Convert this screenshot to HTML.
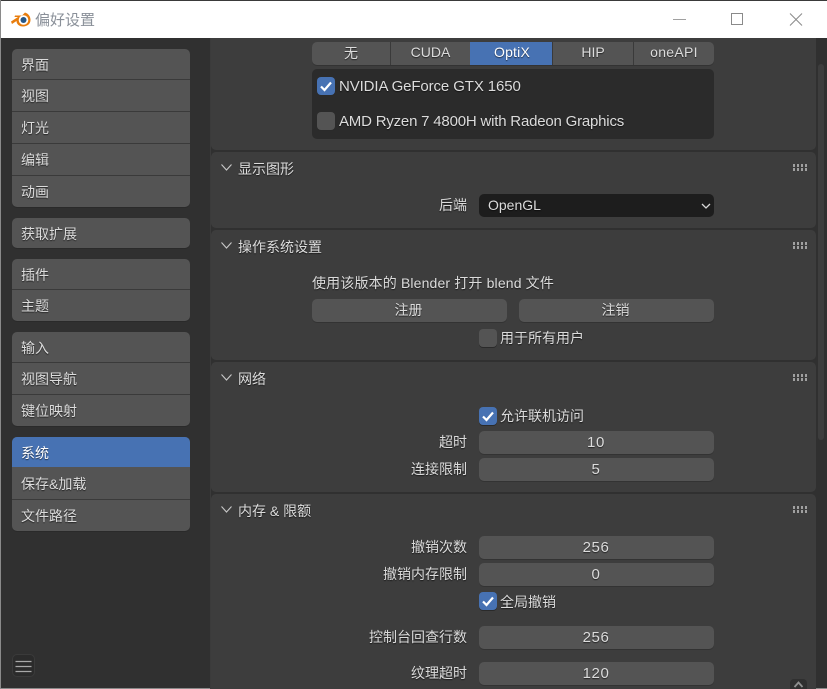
<!DOCTYPE html>
<html lang="zh"><head><meta charset="utf-8"><style>
html,body{margin:0;padding:0;background:#303030}
#w{position:relative;width:827px;height:689px;overflow:hidden;background:#303030;font:14px "Liberation Sans","Noto Sans CJK SC",sans-serif;color:#e0e0e0}
#w div,#w span.t{position:absolute;box-sizing:border-box}
.t{white-space:nowrap;line-height:20px;text-shadow:0 1px 1px rgba(0,0,0,.6);color:#dcdcdc}
.g{left:12px;width:178px;background:#545454;border-radius:5px;box-shadow:0 1px 0 #2a2a2a}
.s{left:0;width:178px;height:1px;background:#3a3a3a}
.p{left:211px;width:605px;background:#3d3d3d;border-radius:5px}
.b{background:#545454;border-radius:5px;box-shadow:0 1px 0 #333;text-align:center;line-height:22px;color:#dcdcdc;text-shadow:0 1px 1px rgba(0,0,0,.6)}
.n{font-size:15px;letter-spacing:.6px;line-height:23px;padding-right:1px}
.c{width:18px;height:18px;border-radius:4px;background:#545454;box-shadow:0 1px 0 #2a2a2a}
.c.on{background:#4772b3}
.c svg{position:absolute;left:0;top:0}
.gr{left:793px;width:14px;height:7px;background:repeating-linear-gradient(90deg,#a0a0a0 0 2px,#3d3d3d 2px 4px)}
.gr:after{content:"";position:absolute;left:0;top:3px;width:14px;height:1px;background:#3d3d3d}
.ch{position:absolute}
.r{text-align:right;width:200px}
</style></head><body><div id="w">
<div style="left:0;top:0;width:827px;height:1px;background:#3a3a3a"></div>
<div style="left:1px;top:1px;width:826px;height:37px;background:#fff"></div>
<div style="left:0;top:0;width:1px;height:689px;background:#8a8a8a"></div>
<div style="left:0;top:688px;width:827px;height:1px;background:#8a8a8a"></div>
<svg class="ch" style="left:10px;top:10px" width="22" height="18" viewBox="0 0 22 18"><path d="M1 11.500 L8 7 L4.500 7 L5 5.500 L12 5.500 L15 2.500 C18 3.500 20.500 6 20.500 10 C20.500 14 17 16.500 13 16.500 C9 16.500 6.500 14 6.500 11 L2 14 Z" fill="#e87d0d"/><circle cx="13.500" cy="10" r="4.800" fill="#fff"/><circle cx="13.500" cy="10" r="3" fill="#265787"/></svg>
<span class="t" style="left:35px;top:11px;font-size:15px;color:#8a9099;text-shadow:none">偏好设置</span>
<svg class="ch" style="left:670px;top:10px" width="140" height="20" viewBox="0 0 140 20"><path d="M3 9.500H16" stroke="#a0a0a0" fill="none"/><rect x="61.500" y="3.500" width="11" height="11" stroke="#8a8a8a" fill="none"/><path d="M120 3.500L132 15.500M132 3.500L120 15.500" stroke="#8a8a8a" fill="none"/></svg>

<!-- sidebar -->
<div class="g" style="top:49px;height:158px"><div class="s" style="top:30px"></div><div class="s" style="top:62px"></div><div class="s" style="top:94px"></div><div class="s" style="top:126px"></div></div>
<span class="t" style="left:21px;top:55px">界面</span><span class="t" style="left:21px;top:86px">视图</span><span class="t" style="left:21px;top:118px">灯光</span><span class="t" style="left:21px;top:150px">编辑</span><span class="t" style="left:21px;top:182px">动画</span>
<div class="g" style="top:218px;height:30px"></div><span class="t" style="left:21px;top:224px">获取扩展</span>
<div class="g" style="top:259px;height:62px"><div class="s" style="top:30px"></div></div>
<span class="t" style="left:21px;top:265px">插件</span><span class="t" style="left:21px;top:296px">主题</span>
<div class="g" style="top:332px;height:94px"><div class="s" style="top:30px"></div><div class="s" style="top:62px"></div></div>
<span class="t" style="left:21px;top:338px">输入</span><span class="t" style="left:21px;top:369px">视图导航</span><span class="t" style="left:21px;top:401px">键位映射</span>
<div class="g" style="top:437px;height:94px"><div style="left:0;top:0;width:178px;height:30px;background:#4772b3;border-radius:5px 5px 0 0"></div><div class="s" style="top:62px"></div></div>
<span class="t" style="left:21px;top:443px;color:#fff">系统</span><span class="t" style="left:21px;top:474px">保存&amp;加载</span><span class="t" style="left:21px;top:506px">文件路径</span>
<div style="left:12px;top:654px;width:23px;height:23px;border-radius:5px;background:#2b2b2b;border:1px solid #3a3a3a"></div>
<svg class="ch" style="left:12px;top:654px" width="23" height="23"><path d="M3.500 7.500H19.500M3.500 12.500H19.500M3.500 17.500H19.500" stroke="#a8a8a8" stroke-width="1.300" fill="none"/></svg>

<!-- right region -->
<div style="left:210px;top:38px;width:1px;height:651px;background:#3b3b3b"></div>
<div style="left:818px;top:64px;width:6px;height:376px;background:#3d3d3d;border-radius:3px"></div>

<!-- panel 1 -->
<div class="p" style="top:38px;height:112px;border-radius:0 0 5px 5px"></div>
<div class="b" style="left:312px;top:42px;width:402px;height:23px;line-height:21px"></div>
<div style="left:470px;top:42px;width:82px;height:23px;background:#4772b3"></div>
<div style="left:390px;top:42px;width:1px;height:23px;background:#3a3a3a"></div>
<div style="left:552px;top:42px;width:1px;height:23px;background:#3a3a3a"></div>
<div style="left:633px;top:42px;width:1px;height:23px;background:#3a3a3a"></div>
<span class="t" style="left:312px;top:43px;width:78px;text-align:center">无</span>
<span class="t" style="left:391px;top:42px;width:79px;text-align:center">CUDA</span>
<span class="t" style="left:471px;top:42px;width:82px;text-align:center;color:#fff;letter-spacing:.2px">OptiX</span>
<span class="t" style="left:553px;top:42px;width:80px;text-align:center">HIP</span>
<span class="t" style="left:634px;top:42px;width:80px;text-align:center;letter-spacing:.3px">oneAPI</span>
<div style="left:312px;top:69px;width:402px;height:70px;background:#2b2b2b;border-radius:5px"></div>
<div class="c on" style="left:317px;top:77px"><svg width="18" height="18"><path d="M4 9.500L7.500 13L14 5.500" stroke="#fff" stroke-width="2.200" fill="none"/></svg></div>
<span class="t" style="left:339px;top:76px;font-size:15px;letter-spacing:-.11px;line-height:22px">NVIDIA GeForce GTX 1650</span>
<div class="c" style="left:317px;top:112px"></div>
<span class="t" style="left:339px;top:111px;font-size:15px;letter-spacing:-.2px;line-height:22px">AMD Ryzen 7 4800H with Radeon Graphics</span>

<!-- panel 2 -->
<div class="p" style="top:152px;height:76px"></div>
<svg class="ch" style="left:220px;top:163px" width="14" height="10"><path d="M1.500 1.500L6.500 7L11.500 1.500" stroke="#c8c8c8" stroke-width="1.100" fill="none"/></svg>
<span class="t" style="left:238px;top:159px">显示图形</span><div class="gr" style="top:164px"></div>
<span class="t r" style="left:267px;top:195px">后端</span>
<div style="left:479px;top:194px;width:235px;height:23px;background:#1d1d1d;border-radius:5px"></div>
<span class="t" style="left:488px;top:195px">OpenGL</span>
<svg class="ch" style="left:701px;top:202px" width="10" height="8"><path d="M1 2L5 6L9 2" stroke="#d8d8d8" stroke-width="1.300" fill="none"/></svg>

<!-- panel 3 -->
<div class="p" style="top:230px;height:130px"></div>
<svg class="ch" style="left:220px;top:241px" width="14" height="10"><path d="M1.500 1.500L6.500 7L11.500 1.500" stroke="#c8c8c8" stroke-width="1.100" fill="none"/></svg>
<span class="t" style="left:238px;top:237px">操作系统设置</span><div class="gr" style="top:242px"></div>
<span class="t" style="left:312px;top:273px;letter-spacing:.15px">使用该版本的 Blender 打开 blend 文件</span>
<div class="b" style="left:312px;top:299px;width:195px;height:23px;padding-right:2px">注册</div>
<div class="b" style="left:519px;top:299px;width:195px;height:23px;padding-right:2px">注销</div>
<div class="c" style="left:479px;top:329px"></div>
<span class="t" style="left:500px;top:328px">用于所有用户</span>

<!-- panel 4 -->
<div class="p" style="top:362px;height:130px"></div>
<svg class="ch" style="left:220px;top:373px" width="14" height="10"><path d="M1.500 1.500L6.500 7L11.500 1.500" stroke="#c8c8c8" stroke-width="1.100" fill="none"/></svg>
<span class="t" style="left:238px;top:369px">网络</span><div class="gr" style="top:374px"></div>
<div class="c on" style="left:479px;top:407px"><svg width="18" height="18"><path d="M4 9.500L7.500 13L14 5.500" stroke="#fff" stroke-width="2.200" fill="none"/></svg></div>
<span class="t" style="left:500px;top:406px">允许联机访问</span>
<span class="t r" style="left:267px;top:432px">超时</span>
<div class="b n" style="left:479px;top:431px;width:235px;height:23px">10</div>
<span class="t r" style="left:267px;top:459px">连接限制</span>
<div class="b n" style="left:479px;top:458px;width:235px;height:23px">5</div>

<!-- panel 5 -->
<div class="p" style="top:494px;height:195px;border-radius:5px 5px 0 0"></div>
<svg class="ch" style="left:220px;top:505px" width="14" height="10"><path d="M1.500 1.500L6.500 7L11.500 1.500" stroke="#c8c8c8" stroke-width="1.100" fill="none"/></svg>
<span class="t" style="left:238px;top:501px">内存 &amp; 限额</span><div class="gr" style="top:506px"></div>
<span class="t r" style="left:267px;top:537px">撤销次数</span>
<div class="b n" style="left:479px;top:536px;width:235px;height:23px">256</div>
<span class="t r" style="left:267px;top:564px">撤销内存限制</span>
<div class="b n" style="left:479px;top:563px;width:235px;height:23px">0</div>
<div class="c on" style="left:479px;top:592px"><svg width="18" height="18"><path d="M4 9.500L7.500 13L14 5.500" stroke="#fff" stroke-width="2.200" fill="none"/></svg></div>
<span class="t" style="left:500px;top:592px">全局撤销</span>
<span class="t r" style="left:267px;top:627px">控制台回查行数</span>
<div class="b n" style="left:479px;top:626px;width:235px;height:23px">256</div>
<span class="t r" style="left:267px;top:663px">纹理超时</span>
<div class="b n" style="left:479px;top:662px;width:235px;height:23px">120</div>
<div style="left:790px;top:679px;width:17px;height:10px;background:#303030;border-radius:4px 4px 0 0"></div>
<svg class="ch" style="left:790px;top:679px" width="17" height="9"><path d="M4.500 8L8.500 3.500L12.500 8" stroke="#8f8f8f" stroke-width="1.800" fill="none"/></svg>
</div></body></html>
